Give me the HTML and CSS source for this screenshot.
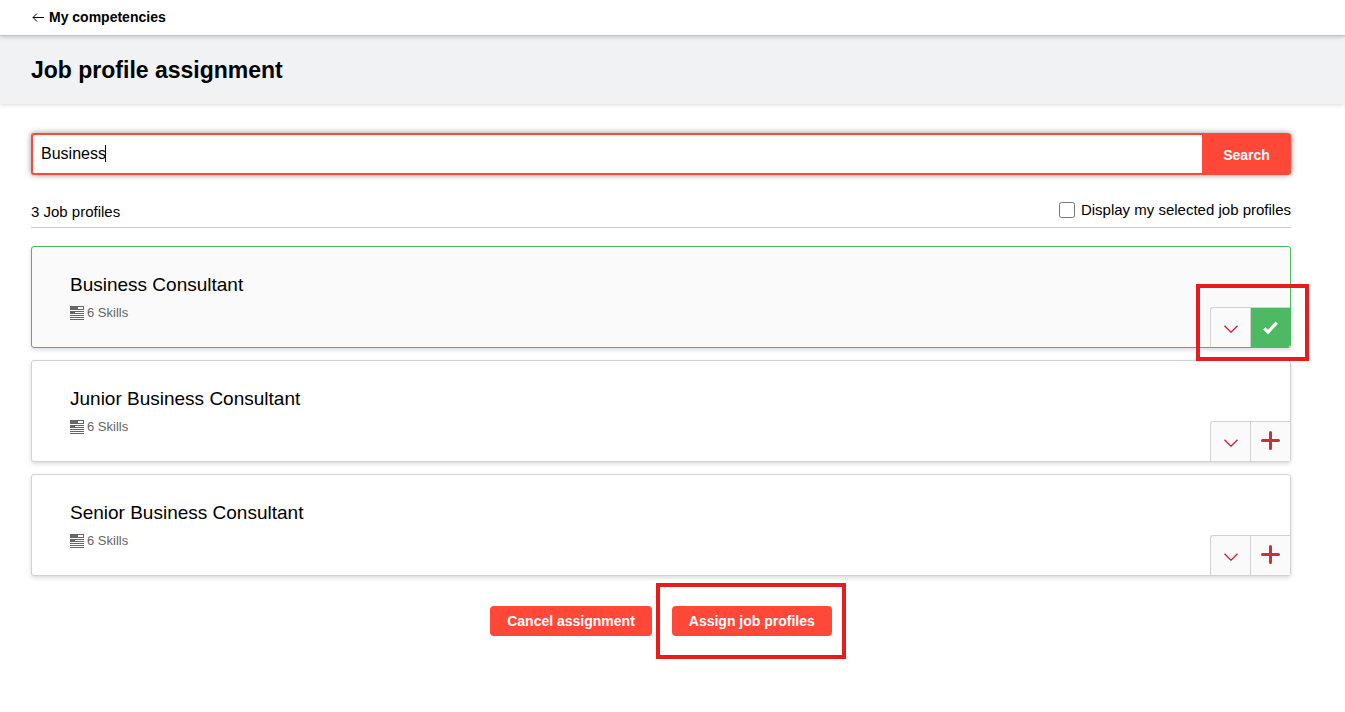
FILE: index.html
```html
<!DOCTYPE html>
<html lang="en">
<head>
    <meta charset="UTF-8">
    <meta name="viewport" content="width=device-width, initial-scale=1.0">
    <title>Job profile assignment</title>
    <link rel="stylesheet" href="styles.css">
</head>
<body>
    <nav class="topbar">
        <a class="back-link" href="#">
            <svg class="back-icon" viewBox="0 0 14 11" aria-hidden="true"><path d="M6 1.500 2 5.500l4 4M2 5.500h11"/></svg>
            My competencies
        </a>
    </nav>
    <header class="page-header">
        <h1>Job profile assignment</h1>
    </header>
    <main class="container">
        <form class="search">
            <div class="search-field">
                <input type="text" class="search-input" value="Business" aria-label="Search job profiles">
                <span class="caret"></span>
            </div>
            <button type="submit" class="search-button">Search</button>
        </form>

        <div class="list-header">
            <span class="count">3 Job profiles</span>
            <label class="filter" for="selected-only">
                <input type="checkbox" id="selected-only">
                Display my selected job profiles
            </label>
        </div>

        <ul class="profiles">
            <li class="profile selected">
                <div class="profile-info">
                    <h2>Business Consultant</h2>
                    <p class="skills">
                        <svg class="skills-icon" viewBox="0 0 14 14" aria-hidden="true"><path d="M0 0h14v4H0zM0 5h14v5H0zM0 11h14v1H0zM0 13h14v1H0z"/><path class="gap" d="M8 1h5v2H8zM5 6h9v1H5zM0 8h14v1H0z"/></svg>
                        6 Skills
                    </p>
                </div>
                <div class="actions highlight">
                    <button type="button" class="action" aria-label="Show details">
                        <svg class="chevron" viewBox="0 0 14 8" aria-hidden="true"><path d="m.5.7 6.500 6.500L13.500.7"/></svg>
                    </button>
                    <button type="button" class="action checked" aria-label="Remove profile">
                        <svg class="check" viewBox="0 0 14 12" aria-hidden="true"><path d="m1.200 6.800 3.500 3.500L12.800 1.500"/></svg>
                    </button>
                </div>
            </li>
            <li class="profile">
                <div class="profile-info">
                    <h2>Junior Business Consultant</h2>
                    <p class="skills">
                        <svg class="skills-icon" viewBox="0 0 14 14" aria-hidden="true"><path d="M0 0h14v4H0zM0 5h14v5H0zM0 11h14v1H0zM0 13h14v1H0z"/><path class="gap" d="M8 1h5v2H8zM5 6h9v1H5zM0 8h14v1H0z"/></svg>
                        6 Skills
                    </p>
                </div>
                <div class="actions">
                    <button type="button" class="action" aria-label="Show details">
                        <svg class="chevron" viewBox="0 0 14 8" aria-hidden="true"><path d="m.5.7 6.500 6.500L13.500.7"/></svg>
                    </button>
                    <button type="button" class="action" aria-label="Add profile">
                        <svg class="plus" viewBox="0 0 19 19" aria-hidden="true"><path d="M9.500 1.500v16M1.500 9.500h16"/></svg>
                    </button>
                </div>
            </li>
            <li class="profile">
                <div class="profile-info">
                    <h2>Senior Business Consultant</h2>
                    <p class="skills">
                        <svg class="skills-icon" viewBox="0 0 14 14" aria-hidden="true"><path d="M0 0h14v4H0zM0 5h14v5H0zM0 11h14v1H0zM0 13h14v1H0z"/><path class="gap" d="M8 1h5v2H8zM5 6h9v1H5zM0 8h14v1H0z"/></svg>
                        6 Skills
                    </p>
                </div>
                <div class="actions">
                    <button type="button" class="action" aria-label="Show details">
                        <svg class="chevron" viewBox="0 0 14 8" aria-hidden="true"><path d="m.5.7 6.500 6.500L13.500.7"/></svg>
                    </button>
                    <button type="button" class="action" aria-label="Add profile">
                        <svg class="plus" viewBox="0 0 19 19" aria-hidden="true"><path d="M9.500 1.500v16M1.500 9.500h16"/></svg>
                    </button>
                </div>
            </li>
        </ul>

        <div class="buttons">
            <button type="button" class="btn">Cancel assignment</button>
            <div class="highlight">
                <button type="button" class="btn">Assign job profiles</button>
            </div>
        </div>
    </main>
</body>
</html>
```
FILE: styles.css
```css
* {
    box-sizing: border-box;
}

body {
    margin: 0;
    font-family: "Liberation Sans", Arial, sans-serif;
    font-size: 15px;
    color: #000;
    background-color: #fff;
}

button,
input {
    font-family: inherit;
}

button {
    cursor: pointer;
}

svg {
    display: block;
    fill: none;
}

.topbar {
    position: relative;
    display: flex;
    align-items: center;
    height: 36px;
    padding: 0 31px 2px;
    border-bottom: 1px solid #c4c5c6;
    box-shadow: 0 1px 4px rgba(0, 0, 0, 0.2);
}

.back-link {
    display: flex;
    align-items: center;
    gap: 4px;
    font-size: 14px;
    font-weight: bold;
    color: #000;
    text-decoration: none;
}

.back-icon {
    width: 14px;
    height: 11px;
    margin-top: 2px;
    stroke: #000;
}

.page-header {
    padding: 20px 31px;
    background-color: #f1f2f4;
    box-shadow: 0 1px 4px rgba(0, 0, 0, 0.15);
}

h1 {
    margin: 0;
    font-size: 23px;
    line-height: 28px;
}

.container {
    padding: 29px 54px 29px 31px;
}

.search {
    display: flex;
    height: 42px;
    border-radius: 3px;
    box-shadow: 0 0 6px rgba(0, 0, 0, 0.4);
}

.search-field {
    position: relative;
    flex: 1;
}

.search-input {
    width: 100%;
    height: 100%;
    padding: 0 8px 1px;
    border: 2px solid #ff4837;
    border-right: none;
    border-radius: 3px 0 0 3px;
    font-size: 16px;
    outline: none;
}

.caret {
    position: absolute;
    top: 12px;
    left: 74px;
    width: 1px;
    height: 17px;
    background-color: #000;
}

.search-button {
    width: 89px;
    padding: 2px 0 0;
    border: none;
    border-radius: 0 3px 3px 0;
    background-color: #ff4837;
    color: #fff;
    font-size: 14px;
    font-weight: bold;
}

.list-header {
    display: flex;
    justify-content: space-between;
    align-items: center;
    margin-top: 19px;
    padding-bottom: 2px;
    height: 34px;
    border-bottom: 1px solid #ccc;
}

.count {
    padding-top: 4px;
}

.filter {
    display: flex;
    align-items: center;
    gap: 6px;
}

.filter input {
    width: 16px;
    height: 16px;
    margin: 0;
}

.profiles {
    display: flex;
    flex-direction: column;
    gap: 12px;
    margin: 18px 0 30px;
    padding: 0;
    list-style: none;
}

.profile {
    display: flex;
    justify-content: space-between;
    border: 1px solid #d2d2d2;
    border-radius: 3px;
    background-color: #fff;
    box-shadow: 0 2px 4px rgba(0, 0, 0, 0.14);
}

.profile.selected {
    border-color: #4db963;
    background-color: #fafafa;
}

.profile-info {
    padding: 26px 38px;
}

h2 {
    margin: 0;
    font-size: 19px;
    font-weight: normal;
    line-height: 24px;
}

.skills {
    display: flex;
    align-items: center;
    gap: 3px;
    margin: 8px 0 0;
    font-size: 13px;
    line-height: 16px;
    color: #666;
}

.skills-icon {
    width: 14px;
    height: 14px;
    fill: #666;
}

.skills-icon .gap {
    fill: #fff;
}

.actions {
    display: flex;
    align-self: flex-end;
    border-top: 1px solid #d2d2d2;
    border-left: 1px solid #d2d2d2;
    border-radius: 3px 0 0 0;
    background-color: #fafafa;
}

.action {
    display: flex;
    justify-content: center;
    align-items: center;
    width: 39px;
    height: 39px;
    padding: 0;
    border: none;
    background: none;
}

.action + .action {
    width: 40px;
    border-left: 1px solid #d2d2d2;
}

.action.checked {
    background-color: #4db963;
    border-radius: 0 0 2px 0;
}

.chevron {
    width: 14px;
    height: 8px;
    margin-top: 3px;
    stroke: #c4203a;
    stroke-width: 1.3;
}

.check {
    width: 15px;
    height: 13px;
    stroke: #fff;
    stroke-width: 3;
}

.plus {
    width: 19px;
    height: 19px;
    margin-bottom: 2px;
    stroke: #c9303a;
    stroke-width: 3;
    stroke-linecap: round;
}

.buttons {
    display: flex;
    justify-content: center;
    gap: 20px;
}

.btn {
    height: 30px;
    padding: 0 17px;
    border: none;
    border-radius: 4px;
    background-color: #ff4837;
    color: #fff;
    font-size: 14px;
    font-weight: bold;
}

/* red frame around the controls to click */
.highlight {
    position: relative;
}

.highlight::after {
    content: "";
    position: absolute;
    z-index: 1;
    inset: -23px -14px -23px -16px;
    border: 4px solid #e81c1c;
    pointer-events: none;
}

.actions.highlight::after {
    inset: -24px -19px -14px -15px;
}
```
